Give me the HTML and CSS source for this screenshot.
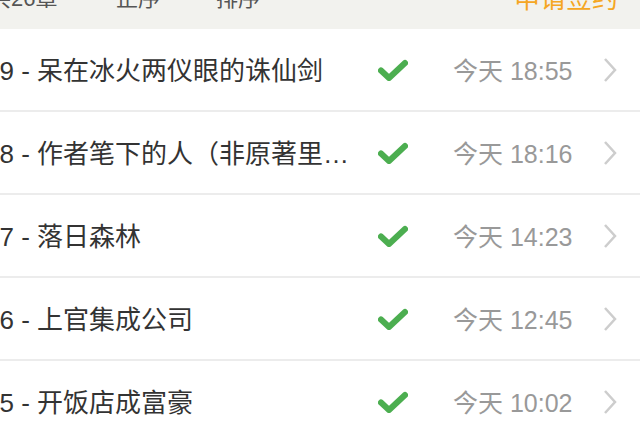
FILE: index.html
```html
<!DOCTYPE html>
<html>
<head>
  <title>章节目录</title>
  <link rel="stylesheet" href="styles.css">
</head>
<body>
  <div class="page">
    <div class="toolbar">
      <span class="toolbar-item count">共26章</span>
      <span class="toolbar-item order">正序</span>
      <span class="toolbar-item sort">排序</span>
      <span class="toolbar-item apply">申请签约</span>
    </div>

    <div class="chapter-list">
      <div class="chapter">
        <span class="chapter-title">29 - 呆在冰火两仪眼的诛仙剑</span>
        <svg class="check" viewBox="0 0 30 22"><path d="M3 11.5 L11 19 L27 4" /></svg>
        <span class="chapter-time">今天 18:55</span>
        <svg class="arrow" viewBox="0 0 14 26"><path d="M2 2 L12 13 L2 24" /></svg>
      </div>
      <div class="chapter">
        <span class="chapter-title">28 - 作者笔下的人（非原著里的人物）</span>
        <svg class="check" viewBox="0 0 30 22"><path d="M3 11.5 L11 19 L27 4" /></svg>
        <span class="chapter-time">今天 18:16</span>
        <svg class="arrow" viewBox="0 0 14 26"><path d="M2 2 L12 13 L2 24" /></svg>
      </div>
      <div class="chapter">
        <span class="chapter-title">27 - 落日森林</span>
        <svg class="check" viewBox="0 0 30 22"><path d="M3 11.5 L11 19 L27 4" /></svg>
        <span class="chapter-time">今天 14:23</span>
        <svg class="arrow" viewBox="0 0 14 26"><path d="M2 2 L12 13 L2 24" /></svg>
      </div>
      <div class="chapter">
        <span class="chapter-title">26 - 上官集成公司</span>
        <svg class="check" viewBox="0 0 30 22"><path d="M3 11.5 L11 19 L27 4" /></svg>
        <span class="chapter-time">今天 12:45</span>
        <svg class="arrow" viewBox="0 0 14 26"><path d="M2 2 L12 13 L2 24" /></svg>
      </div>
      <div class="chapter">
        <span class="chapter-title">25 - 开饭店成富豪</span>
        <svg class="check" viewBox="0 0 30 22"><path d="M3 11.5 L11 19 L27 4" /></svg>
        <span class="chapter-time">今天 10:02</span>
        <svg class="arrow" viewBox="0 0 14 26"><path d="M2 2 L12 13 L2 24" /></svg>
      </div>
    </div>
  </div>
</body>
</html>
```

FILE: styles.css
```css
body {
  font-family: "Liberation Sans", "Noto Sans CJK SC", sans-serif;
  background-color: #fff;
  margin: 0;
  padding: 0;
  overflow: hidden;
}

.page {
  margin-top: -37px;
  margin-left: -11px;
}

.toolbar {
  display: flex;
  align-items: center;
  height: 66px;
  background-color: #f2f2ee;
  font-size: 22px;
  color: #555;
}

.toolbar-item.count {
  margin-left: 0;
  width: 127px;
}

.toolbar-item.order {
  width: 100px;
}

.toolbar-item.apply {
  margin-left: auto;
  margin-right: 22px;
  font-size: 26px;
  color: #f5a623;
}

.chapter {
  display: flex;
  align-items: center;
  height: 81px;
  border-bottom: 2px solid #ececec;
  padding-right: 23px;
}

.chapter-title {
  flex: 1;
  min-width: 0;
  white-space: nowrap;
  overflow: hidden;
  text-overflow: ellipsis;
  font-size: 26px;
  color: #333;
  margin-top: -2px;
  margin-left: -4px;
}

.check {
  width: 30px;
  height: 22px;
  margin-left: 22px;
}

.check path {
  fill: none;
  stroke: #4cae50;
  stroke-width: 6;
  stroke-linejoin: round;
  stroke-linecap: round;
}

.chapter-time {
  width: 120px;
  margin-left: 45px;
  font-size: 25px;
  color: #999;
  margin-top: -2px;
}

.arrow {
  width: 14px;
  height: 26px;
  margin-left: 30px;
}

.arrow path {
  fill: none;
  stroke: #cdcdcd;
  stroke-width: 2.5;
}
```
